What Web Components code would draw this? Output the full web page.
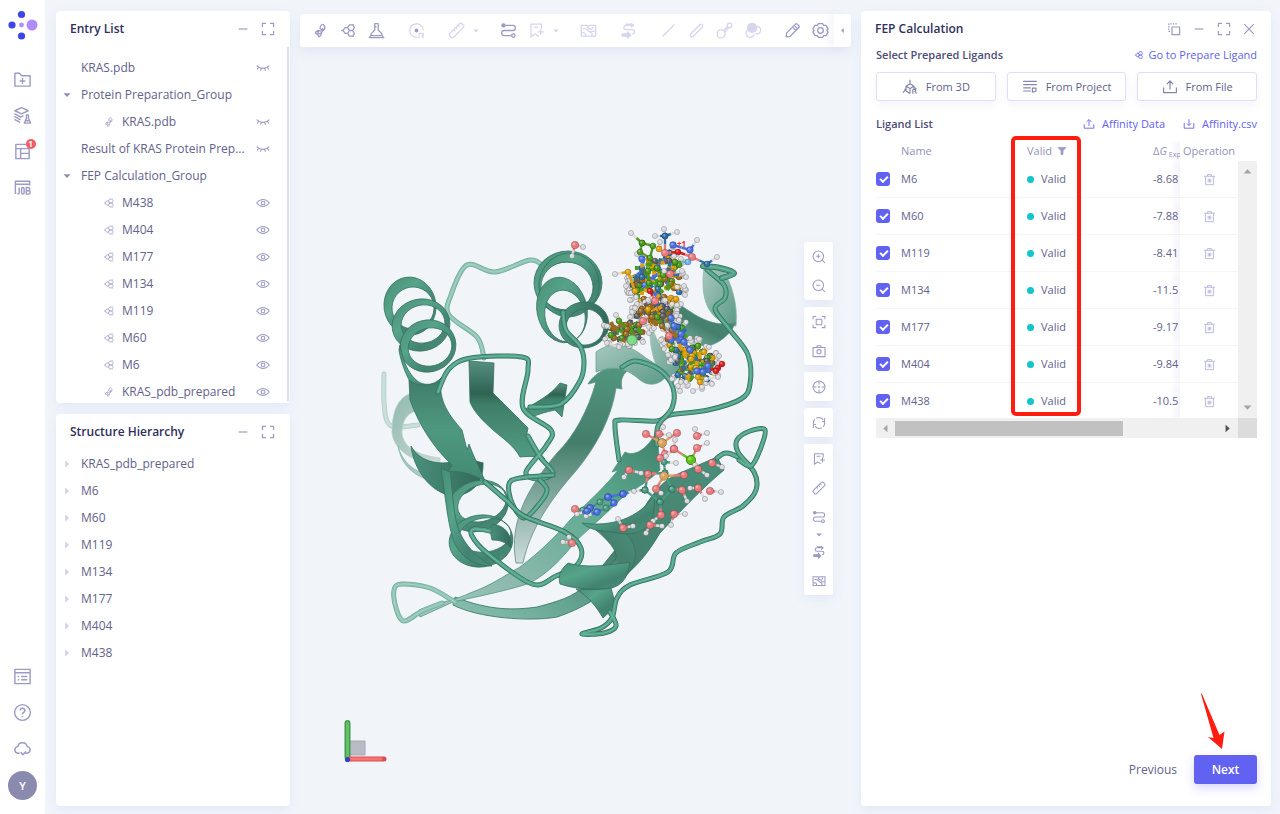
<!DOCTYPE html>
<html lang="en">
<head>
<meta charset="utf-8">
<title>FEP Calculation</title>
<style>
  html, body { margin: 0; height: 100%; }
  body {
    --ink: #2f2f5b;
    --text: #62628c;
    --icon: #9b9bc6;
    --icon-off: #d5d5ee;
    --link: #6161f2;
    --accent: #6161f2;
    --shadow: 0 4px 12px rgba(120, 120, 220, .1);
    background: #f1f5fa;
    font: 12px/20px "Open Sans", "Noto Sans", sans-serif;
    color: var(--text);
  }
</style>
</head>
<body>
<app-shell>
  <side-bar slot="nav"></side-bar>
  <div slot="left" style="display:contents">
    <app-panel heading="Entry List" tools="minus expand" scrollbar>
      <tree-row label="KRAS.pdb" eye="closed"></tree-row>
      <tree-row label="Protein Preparation_Group" caret="open"></tree-row>
      <tree-row label="KRAS.pdb" icon="protein" eye="closed"></tree-row>
      <tree-row label="Result of KRAS Protein Prep..." eye="closed"></tree-row>
      <tree-row label="FEP Calculation_Group" caret="open"></tree-row>
      <tree-row label="M438" icon="ligand" eye="open"></tree-row>
      <tree-row label="M404" icon="ligand" eye="open"></tree-row>
      <tree-row label="M177" icon="ligand" eye="open"></tree-row>
      <tree-row label="M134" icon="ligand" eye="open"></tree-row>
      <tree-row label="M119" icon="ligand" eye="open"></tree-row>
      <tree-row label="M60" icon="ligand" eye="open"></tree-row>
      <tree-row label="M6" icon="ligand" eye="open"></tree-row>
      <tree-row label="KRAS_pdb_prepared" icon="protein" eye="open"></tree-row>
    </app-panel>
    <app-panel heading="Structure Hierarchy" tools="minus expand">
      <tree-row label="KRAS_pdb_prepared" caret="closed"></tree-row>
      <tree-row label="M6" caret="closed"></tree-row>
      <tree-row label="M60" caret="closed"></tree-row>
      <tree-row label="M119" caret="closed"></tree-row>
      <tree-row label="M134" caret="closed"></tree-row>
      <tree-row label="M177" caret="closed"></tree-row>
      <tree-row label="M404" caret="closed"></tree-row>
      <tree-row label="M438" caret="closed"></tree-row>
    </app-panel>
  </div>
  <mol-viewer slot="main"></mol-viewer>
  <app-panel slot="right" heading="FEP Calculation" tools="dock minus expand close">
    <fep-form></fep-form>
  </app-panel>
</app-shell>

<script>
const ICONS = {
  folder: '<path d="M2 3.500h5l2 2.500h9v11H2zM10 8.500v6M7 11.500h6"/>',
  layers: '<path d="M2 5l7-3.200L16 5 9 8.200zM1.500 8l6.500 3.600 3-1.400M1.500 11l6.500 3.600M1.500 14l6 3.200M13.500 9.500h3M14.200 9.800v3.200L12 18h6.500l-2.200-5V9.800M13 15.500h4.500"/>',
  table: '<path d="M3 2.500h14v15H3zM3 7h14M8 7v10.500M8 12h9"/>',
  job: '<path d="M17.500 8V3.500H2.500v12.500h1M2.500 6.500h15M6.500 10v5.500q0 1.500-2 1.500M9 11.500q0-1.500 1.300-1.500 1.400 0 1.400 1.500v4q0 1.500-1.400 1.500Q9 17 9 15.500zM14 10v7h2.200q1.800 0 1.800-1.900 0-1.600-1.800-1.600H14h2q1.500 0 1.500-1.700Q17.500 10 16 10z"/>',
  list: '<path d="M2 2.500h16v15H2zM2 6h16M5 10h1.500M8.500 10H15M5 13.500h1.500M8.500 13.500H15"/>',
  help: '<circle cx="10" cy="10" r="8.300"/><path d="M7.500 8q0-2.500 2.500-2.500T12.500 8q0 1.300-1.400 2T10 12M10 13.700v1.300"/>',
  cloud: '<path d="M7 15H5.500Q2 14.500 2 11.500 2 8.500 5 8q.8-4 5-4t5 4q3 .5 3 3.500T14.500 15H13M8 14l2.500 2.500 3-3.500"/>',
  minus: '<path d="M4.500 10h11"/>',
  expand: '<path d="M3 7.500V3h4.500M12.500 3H17v4.500M17 12.500V17h-4.500M7.500 17H3v-4.500"/>',
  close: '<path d="M4 4l12 12M16 4L4 16"/>',
  dock: '<path d="M7.500 7.500H17V17H7.500z"/><path d="M5 13H3.500V3.500h10V5" stroke-dasharray="1.800 1.400"/>',
  eye: '<path d="M1 10Q5 5 10 5t9 5Q15 15 10 15t-9-5z"/><circle cx="10" cy="10" r="2.600"/>',
  lashes: '<path d="M1 6.500q3.500 4 9 4t9-4M3.800 9L1.500 12M7.500 10.500l-1 3.500M12.500 10.500l1 3.500M16.200 9l2.300 3"/>',
  protein: '<path d="M12.500 2.500q4 3 2 6.500-2.500 2.500-6.500 1-4 .5-4 3.500 3.500 1.500 6.500-.5 3-2 2-6M12 2.500Q9 5 9.500 7.500q2 2.500 5 1M8 10.500q-2.500 4 0 7 3-1 3-4.500"/>',
  ligand: '<path d="M1.500 10h2M3.500 10l2.500-3.500h3l2 3.500-2 3.500H6zM11 3.500h4l2 3-2 3.500h-4L9 6.500zM11 10h4l2 3.500-2 3h-4l-2-3zM15 3.500l1-1M15 16.500l1 1"/>',
  flask: '<path d="M7.500 2h5M8 2v7.500L3.500 14v2h13v-2L12 9.500V2M8 5.500h2M1.500 18.500h17L16.500 16h-13z"/>',
  pick: '<path d="M18 9.500a8 8 0 1 0-7 8.500"/><circle cx="10" cy="10" r="1.500" fill="#9b9bc6" stroke="#9b9bc6"/><path d="M13 13.500h5V16h-1.500l1.500 3M13 13.500V19"/>',
  ruler: '<rect x="0" y="6.800" width="20" height="6.400" rx="2" transform="rotate(-45 10 10)"/><path d="M7 9l1.500 1.500M9.500 6.500L11 8M12 4l1.500 1.500"/>',
  path: '<circle cx="4" cy="4" r="1.800" fill="currentColor"/><path d="M5.500 4H15q3 0 3 3t-3 3H5q-3 0-3 3t3 3h8.500"/><circle cx="15.700" cy="16" r="2"/>',
  bookmark: '<path d="M16 8V2.500H3.500v15l5-3.500 4 3M6.500 6H12M11.500 11.500h7M15 8v7"/>',
  map: '<path d="M1.500 4h6.500l1.500 1 2-1h7v12.500h-17zM3.500 8q4-.5 5.500 1.500t4 3 .5 4M1.500 12.500q4-.5 5 1.500v2.500M9 5q0 3 3 3.500t3-3M12.500 11h5"/>',
  route: '<path d="M13 1.500l3 2.500-3 2.500M16 4H8Q4.500 4 4.500 6.500T7 9h7.500Q17 9 17 11.500T14.500 14M7 2.500h6"/><path d="M2.500 14h6.500v-2.500l3.500 4L9 19v-2.500H2.500z" fill="currentColor"/>',
  line: '<path d="M3 17L17 3"/>',
  stick: '<rect x="0.500" y="8" width="19" height="4" rx="2" transform="rotate(-45 10 10)"/>',
  ball: '<circle cx="6" cy="14" r="4.700"/><circle cx="16" cy="4" r="2.700"/><path d="M9 10.200l4.400-4.600M10.600 11.500L14.800 7"/>',
  spheres: '<circle cx="9.500" cy="7" r="6" fill="currentColor" stroke="none"/><path d="M15.500 5a4.500 4.500 0 1 1-2.500 8.500M4 9.500a4.900 4.900 0 1 0 8 5"/>',
  pencil: '<path d="M2.500 17.500l.7-4.700L13.500 2.500q1-1 2 0l2 2q1 1 0 2L7.200 16.800zM12 4l4 4M10 6l4 4"/>',
  gear: '<circle cx="10" cy="10" r="3.300"/><path d="M7.500 1.800h5l1.200 2.200 2.800 0 2.500 4L17.500 10l1.500 2-2.500 4h-2.800l-1.200 2.200h-5L6.300 16H3.500L1 12l1.500-2L1 8l2.500-4h2.800z"/>',
  zoomin: '<circle cx="9" cy="9" r="7.500"/><path d="M14.500 14.500l4 4M6 9h6M9 6v6"/>',
  zoomout: '<circle cx="9" cy="9" r="7.500"/><path d="M14.500 14.500l4 4M6 9h6"/>',
  fit: '<path d="M1.500 6V2H6M14 2h4.500v4M18.500 14v4H14M6 18H1.500v-4M6 6h8v8H6z"/>',
  camera: '<path d="M1.500 5h17v13h-17zM6.500 5l1-2.500h5l1 2.500"/><circle cx="10" cy="11" r="3"/>',
  target: '<circle cx="10" cy="10" r="8.500"/><path d="M10 1.500v5M10 13.500v5M1.500 10h5M13.500 10h5"/><circle cx="10" cy="10" r=".8"/>',
  refresh: '<path d="M6 3.200Q12 .5 16 5.500M14 16.800Q8 19.500 4 14.500M17.500 7.500a8 8 0 0 1-1.500 8M18 3v5h-3.500M2.500 12.500a8 8 0 0 1 1.500-8M2 17v-5h3.500"/>',
  cube: '<path d="M10 1v5M10 6l5 3v3M10 6L5 9v6l5 3M5 9l5 3 5-3M10 12v6M5 13l-4 4M5 13H3M13.500 13H17v2.500h-1.500M13.500 13v5.500M16.500 15.500l1.500 3M15 11l3 1"/>',
  project: '<path d="M1.500 3h17M1.500 7h17M1.500 11h9.500M1.500 15h9.500M13 11.500h4.500v3.500L15.500 16H13zM13 11.500V17"/>',
  upload: '<path d="M10 13V3M6 6.500L10 2.500l4 4M2 10.500v6.500h16v-6.500"/>',
  download: '<path d="M10 2v10M6.500 9l3.500 3.500L13.500 9M2 8.500v8.500h16V8.500"/>',
  trash: '<path d="M1.500 5h17M4 5v13h12V5M7 5V2.500h6V5M8 9v5.500M12 9v5.500M10 9v5.500"/>',
  funnel: '<path d="M2 3h16l-6 6.500V17H8V9.500z" fill="currentColor"/>',
  down: '<path d="M3 6.500h14L10 14z" fill="currentColor" stroke="none"/>',
  right: '<path d="M6.500 3v14l7.500-7z" fill="currentColor" stroke="none"/>',
  left: '<path d="M13.500 3v14L6 10z" fill="currentColor" stroke="none"/>',
  up: '<path d="M3 13.500h14L10 6z" fill="currentColor" stroke="none"/>'
};

const define = (name, markup, setup) => customElements.define(name, class extends HTMLElement {
  constructor() { super(); this.attachShadow({ mode: 'open' }); }
  connectedCallback() {
    this.shadowRoot.innerHTML = typeof markup === 'function' ? markup(this) : markup;
    if (setup) setup(this.shadowRoot, this);
  }
});

define('ui-icon', el => `
  <style>
    :host { display: inline-block; width: 16px; height: 16px; flex: none; }
    svg { display: block; width: 100%; height: 100%; }
  </style>
  <svg viewBox="0 0 20 20" fill="none" stroke="currentColor" stroke-width="1.500" stroke-linejoin="round" aria-hidden="true">${ICONS[el.getAttribute('name')]}</svg>`);

define('app-shell', `
  <style>
    :host { display: flex; min-height: 100vh; }
    main { flex: 1; min-width: 0; display: flex; gap: 10px; padding: 11px 9px 8px 11px; }
    .left { width: 234px; display: flex; flex-direction: column; gap: 11px; }
    .mid { flex: 1; min-width: 0; display: flex; }
    .right { width: 410px; display: flex; }
    ::slotted(side-bar) { width: 45px; }
  </style>
  <slot name="nav"></slot>
  <main>
    <div class="left"><slot name="left"></slot></div>
    <div class="mid"><slot name="main"></slot></div>
    <div class="right"><slot name="right"></slot></div>
  </main>`);

define('side-bar', `
  <style>
    :host { display: flex; flex-direction: column; align-items: center; background: #fff; padding: 10px 0 14px; box-sizing: border-box; flex: none; }
    .logo { width: 30px; height: 30px; display: block; margin-bottom: 21px; }
    button { position: relative; width: 36px; height: 36px; padding: 0; border: 0; background: none; color: var(--icon); display: grid; place-items: center; }
    ui-icon { width: 19px; height: 19px; }
    .badge { position: absolute; left: 21px; top: 6px; width: 10px; height: 10px; border-radius: 5px; background: #f55b63; color: #fff; font: bold 8px/10px "Noto Sans", sans-serif; text-align: center; }
    .fill { flex: 1; }
    .avatar { width: 29px; height: 29px; border-radius: 50%; background: #8a8aae; color: #fff; font: 600 11px/29px "Open Sans", sans-serif; margin-top: 5px; }
  </style>
  <svg class="logo" viewBox="0 0 30 30"><circle cx="13.500" cy="4.500" r="3.600" fill="#3d45e6"/><circle cx="4" cy="15" r="3.600" fill="#3d45e6"/><circle cx="13.500" cy="26" r="3.600" fill="#3d45e6"/><circle cx="13.500" cy="15" r="2.400" fill="#b18cff"/><circle cx="24" cy="15" r="5.500" fill="#b18cff"/></svg>
  <button aria-label="New project"><ui-icon name="folder"></ui-icon></button>
  <button aria-label="Modules"><ui-icon name="layers"></ui-icon></button>
  <button aria-label="Results"><ui-icon name="table"></ui-icon><span class="badge">1</span></button>
  <button aria-label="Jobs"><ui-icon name="job"></ui-icon></button>
  <span class="fill"></span>
  <button aria-label="Log"><ui-icon name="list"></ui-icon></button>
  <button aria-label="Help"><ui-icon name="help"></ui-icon></button>
  <button aria-label="Cloud"><ui-icon name="cloud"></ui-icon></button>
  <button class="avatar">Y</button>`);

define('app-panel', el => `
  <style>
    :host { display: flex; flex-direction: column; flex: 1; min-width: 0; min-height: 0; background: #fff; border-radius: 4px; box-shadow: var(--shadow); }
    header { display: flex; align-items: center; height: 36px; padding: 0 14px; }
    h2 { margin: 0; flex: 1; font-size: 12px; line-height: 20px; font-weight: 600; color: var(--ink); }
    .tools { display: flex; gap: 9px; }
    .tools button { width: 16px; height: 16px; padding: 0; border: 0; background: none; color: var(--icon); }
    .body { flex: 1; min-height: 0; display: flex; flex-direction: column; }
    .bar { border-right: 2px solid #dcdcf2; margin: 0 1px 2px 0; padding-top: 7px; }
  </style>
  <header><h2>${el.getAttribute('heading')}</h2><div class="tools">${el.getAttribute('tools').split(' ').map(t => `<button aria-label="${t}"><ui-icon name="${t}"></ui-icon></button>`).join('')}</div></header>
  <div class="body ${el.hasAttribute('scrollbar') ? 'bar' : ''}"><slot></slot></div>`);

define('tree-row', el => {
  const c = el.getAttribute('caret'), i = el.getAttribute('icon'), e = el.getAttribute('eye');
  return `
  <style>
    :host { display: flex; align-items: center; height: 27px; flex: none; font-size: 12px; color: var(--text); white-space: nowrap; }
    .caret { flex: none; width: 25px; box-sizing: border-box; padding-left: 6px; display: flex; color: #8e8ebb; }
    .caret ui-icon { width: 10px; height: 10px; }
    .caret.closed { color: #cfcfe8; }
    .kind { flex: none; width: 41px; padding-left: 22px; box-sizing: border-box; display: flex; color: #adadd2; }
    .kind ui-icon { width: 12px; height: 12px; }
    .label { flex: 1; min-width: 0; }
    .eye { flex: none; width: 14px; height: 14px; padding: 0; border: 0; background: none; color: var(--icon); margin-right: 17px; display: block; }
    .eye ui-icon { width: 14px; height: 14px; display: block; }
  </style>
  <span class="caret ${c || ''}">${c ? `<ui-icon name="${c === 'open' ? 'down' : 'right'}"></ui-icon>` : ''}</span>
  ${i ? `<span class="kind"><ui-icon name="${i}"></ui-icon></span>` : ''}
  <span class="label">${el.getAttribute('label')}</span>
  ${e ? `<button class="eye" aria-label="Toggle visibility"><ui-icon name="${e === 'open' ? 'eye' : 'lashes'}"></ui-icon></button>` : ''}`;
});

define('tool-bar', () => {
  const item = s => s === '|' ? '<i></i>' : s === 'v' ? '<button class="more" aria-label="More"><ui-icon name="down"></ui-icon></button>'
    : `<button class="${s[0] === '-' ? 'off' : ''}" aria-label="${s.replace('-', '')}"><ui-icon name="${s.replace('-', '')}"></ui-icon></button>`;
  return `
  <style>
    :host { display: flex; align-items: center; height: 33px; padding-left: 6px; background: #fff; border-radius: 3px; box-shadow: 0 6px 12px rgba(120, 120, 200, .1); flex: none; }
    i { width: 12px; flex: none; }
    button { width: 28px; height: 28px; flex: none; padding: 0; border: 0; background: none; color: var(--icon); display: grid; place-items: center; }
    button ui-icon { width: 17px; height: 17px; }
    .off, .more { color: var(--icon-off); }
    .more { width: 12px; }
    .more ui-icon { width: 8px; height: 8px; }
    .end { width: 17px; height: 33px; margin-left: auto; box-shadow: -6px 0 6px rgba(120, 120, 200, .06); }
    .end ui-icon { width: 7px; height: 7px; }
  </style>
  ${'protein ligand flask | -pick | -ruler v | path -bookmark v | -map | -route | -line -stick -ball -spheres | pencil gear'.split(' ').map(item).join('')}
  <button class="end" aria-label="Collapse"><ui-icon name="left"></ui-icon></button>`;
});

define('tool-rail', () => `
  <style>
    :host { display: flex; flex-direction: column; gap: 7px; }
    div { background: #fff; border-radius: 3px; box-shadow: var(--shadow); }
    button { width: 29px; height: 29px; padding: 0; border: 0; background: none; color: var(--icon); display: grid; place-items: center; }
    ui-icon { width: 14px; height: 14px; }
    .v { height: 6px; }
    .v ui-icon { width: 8px; height: 8px; }
  </style>
  ${['zoomin zoomout', 'fit camera', 'target', 'refresh', 'bookmark ruler path v route map'].map(g => `<div>${g.split(' ').map(n =>
    n === 'v' ? '<button class="v" aria-label="More"><ui-icon name="down"></ui-icon></button>' : `<button aria-label="${n}"><ui-icon name="${n}"></ui-icon></button>`).join('')}</div>`).join('')}`);

/* ---- protein scene ---- */
const tube = (pts, c = 'mid', w = 5) => {
  const k = { mid: ['#35705e', '#4f9e85', '#68b79d'], dark: ['#2c5f50', '#3f8069', '#539a82'], pale: ['#73ac9b', '#8cc2b2', '#a4d2c4'], ghost: ['#b3d0c8', '#c3dcd5', '#cde3dc'] }[c];
  let d = `M${pts[0]}`;
  for (let i = 0; i < pts.length - 1; i++) {
    const p0 = pts[i - 1] || pts[i], p1 = pts[i], p2 = pts[i + 1], p3 = pts[i + 2] || p2;
    d += `C${p1[0] + (p2[0] - p0[0]) / 6} ${p1[1] + (p2[1] - p0[1]) / 6} ${p2[0] - (p3[0] - p1[0]) / 6} ${p2[1] - (p3[1] - p1[1]) / 6} ${p2}`;
  }
  return `<g fill="none" stroke-linecap="round" stroke-linejoin="round"><path d="${d}" stroke="${k[0]}" stroke-width="${w}"/><path d="${d}" stroke="${k[1]}" stroke-width="${w - 1.4}"/><path d="${d}" stroke="${k[2]}" stroke-width="${w / 4}"/></g>`;
};
const rib = (d, f, s = '#35705e', o = 1) => `<path d="${d}" fill="${f}" stroke="${s}" stroke-width=".8" stroke-linejoin="round" fill-rule="evenodd" opacity="${o}"/>`;
const ell = (x, y, a, b, r) => {
  const t = r * Math.PI / 180, X = a * Math.cos(t), Y = a * Math.sin(t);
  return `M${x - X} ${y - Y}A${a} ${b} ${r} 1 1 ${x + X} ${y + Y}A${a} ${b} ${r} 1 1 ${x - X} ${y - Y}Z`;
};
const ring = (x, y, a, b, r, dx, dy, w, h, f = 'url(#coil)') => rib(ell(x, y, a, b, r) + ell(x + dx, y + dy, a - w, b - h, r), f);

const COL = { O: '#e87a7c', H: '#dcdce0', N: '#4a6fe0', C: '#4a9a82', P: '#d9a15c', G: '#4a9a1c', Y: '#e0a00c', B: '#2f6fa8', R: '#dd1c1c', K: '#5b5f63', M: '#5fc314', L: '#7ddc86', T: '#9c6a22', S: '#6bb3e8' };
const RAD = { H: 2.6, O: 3.8, N: 3.4, C: 3.2, P: 4.4, M: 4.6, L: 4.4 };
const ball = (t, x, y) => { const r = RAD[t] || 3; return `<circle cx="${x}" cy="${y}" r="${r}" fill="${COL[t]}" stroke="#00000055" stroke-width=".6"/><circle cx="${x - r / 4}" cy="${y - r / 4}" r="${r / 2.6}" fill="#fff" opacity=".35"/>`; };
const bond = (t, a, u, b, w = 2.4) => { const m = [(a[0] + b[0]) / 2, (a[1] + b[1]) / 2]; return `<path d="M${a}L${m}" stroke="${COL[t]}" stroke-width="${w}"/><path d="M${m}L${b}" stroke="${COL[u]}" stroke-width="${w}"/>`; };
/* text form: "type x y type x y ..." draws a bonded chain */
const chain = s => {
  const v = s.split(' '), a = []; let o = '';
  for (let i = 0; i < v.length; i += 3) a.push([v[i], +v[i + 1], +v[i + 2]]);
  for (let i = 1; i < a.length; i++) o += bond(a[i - 1][0], a[i - 1].slice(1), a[i][0], a[i].slice(1));
  return o + a.map(p => ball(...p)).join('');
};
/* overlapping ligand poses: hydrogens round the rim, sticks in the middle */
const cluster = (cx, cy, rx, ry, n, types, seed) => {
  let s = seed, core = '', rim = ''; const rnd = () => (s = (s * 16807) % 2147483647) / 2147483647;
  for (let i = 0; i < n; i++) {
    const t = rnd() * 6.283, q = Math.sqrt(rnd()), x = Math.round(cx + rx * q * Math.cos(t)), y = Math.round(cy + ry * q * Math.sin(t));
    const k = types[Math.floor(rnd() * types.length)], u = rnd() * 6.283;
    const out = q > .7, X = Math.round(x + 7 * Math.cos(out ? t : u)), Y = Math.round(y + 7 * Math.sin(out ? t : u));
    const e = out ? 'H' : types[Math.floor(rnd() * types.length)];
    const g = bond(k, [x, y], e, [X, Y], 4) + (i % 3 && !out ? '' : ball(k, x, y)) + (out ? ball(e, X, Y) : '');
    if (out) rim += g; else core += g;
  }
  return rim + core;
};

const scene = () => `
  <defs>
    <linearGradient id="coil" x1="0" y1="0" x2="1" y2="1"><stop offset="0" stop-color="#478d76"/><stop offset=".35" stop-color="#56a48a"/><stop offset=".7" stop-color="#428370"/><stop offset="1" stop-color="#4b927a"/></linearGradient>
    <linearGradient id="coilDark" x1="0" y1="0" x2="1" y2="0"><stop offset="0" stop-color="#4a927b"/><stop offset="1" stop-color="#33685a"/></linearGradient>
    <linearGradient id="down" x1="0" y1="0" x2="0" y2="1"><stop offset="0" stop-color="#529880"/><stop offset=".4" stop-color="#457e6b"/><stop offset=".75" stop-color="#93b5ac"/><stop offset="1" stop-color="#cddcdc"/></linearGradient>
    <linearGradient id="sheet" x1="1" y1="0" x2="0" y2="1"><stop offset="0" stop-color="#3f8069"/><stop offset=".3" stop-color="#5aa88e"/><stop offset=".65" stop-color="#86b6a8"/><stop offset="1" stop-color="#a6c9c0"/></linearGradient>
    <linearGradient id="sheet2" x1="1" y1="0" x2="0" y2="1"><stop offset="0" stop-color="#4a8f79"/><stop offset=".5" stop-color="#45806d"/><stop offset=".75" stop-color="#66a592"/><stop offset="1" stop-color="#8cc2b2"/></linearGradient>
    <linearGradient id="fold" x1="0" y1="0" x2="0" y2="1"><stop offset="0" stop-color="#57907e"/><stop offset=".33" stop-color="#2f6353"/><stop offset=".45" stop-color="#3f7f69"/><stop offset="1" stop-color="#529c84"/></linearGradient>
    <linearGradient id="arrow" x1="0" y1="0" x2="0" y2="1"><stop offset="0" stop-color="#3f7d69"/><stop offset=".5" stop-color="#4f9880"/><stop offset="1" stop-color="#438a72"/></linearGradient>
    <linearGradient id="pale" x1="0" y1="0" x2="1" y2="1"><stop offset="0" stop-color="#a6c8bf"/><stop offset="1" stop-color="#5c9a86"/></linearGradient>
    <linearGradient id="ghost" x1="0" y1="0" x2="1" y2="1"><stop offset="0" stop-color="#8fb8ac"/><stop offset="1" stop-color="#cddedb"/></linearGradient>
  </defs>
  <g>
  ${tube([[384, 374], [384, 402], [387, 421], [396, 427], [418, 425]], 'ghost')}
  ${rib('M392 433C392 405 402 392 420 392C438 394 446 404 446 420C440 412 430 408 420 410C406 412 402 422 402 434C404 448 418 455 440 458L440 466C412 462 394 450 392 433Z', 'url(#ghost)', '#b7d0c9')}
  ${rib('M398 446C404 470 430 482 458 474L483 462C482 480 462 488 442 484C416 478 402 468 398 446Z', 'url(#ghost)', '#8fb8ac')}
  ${rib('M411 446C420 462 440 468 466 458L483 463C484 484 470 496 452 496C430 492 414 470 411 446Z', 'url(#coilDark)')}
  ${rib('M628 362C606 366 594 374 588 384L596 382C588 410 575 435 557 453C530 485 508 520 516 563L523 563C530 530 550 500 575 472C598 445 612 415 616 388L622 389C619 376 626 368 644 362Z', 'url(#down)', '#5f8f80')}
  ${rib('M704 268C700 300 708 322 736 326C738 304 732 284 722 268Z', 'url(#pale)', '#8ab5a8')}
  ${rib('M678 303C700 320 718 328 736 322C730 336 716 346 704 346C688 340 668 336 660 322Z', 'url(#sheet2)', '#5c9a86')}
  ${rib('M650 318C654 340 668 362 686 368L672 384C656 376 648 350 650 318Z', 'url(#pale)', '#9fc3ba')}
  ${rib('M596 352C616 338 630 346 646 358L668 372C664 384 650 388 640 380C624 366 612 366 596 372Z', 'url(#pale)', '#6fa593')}
  ${tube([[543, 266], [530, 260], [495, 272], [467, 265], [451, 295], [449, 315], [477, 337], [484, 358]], 'pale')}
  ${rib('M717 457L724 470C700 490 680 512 660 533C650 550 638 566 623 577C605 592 590 606 557 617C530 622 478 618 453 605L455 597C490 611 515 610 537 607C560 601 574 596 583 587C600 570 625 540 647 503C660 484 668 478 680 473Z', 'url(#sheet2)')}
  ${rib('M625 452C636 458 650 446 657 430L660 470C650 480 640 486 623 497C608 512 592 526 577 540C562 558 550 572 530 583C510 590 480 596 453 602L420 617L419 610C440 602 456 600 470 593C490 586 504 576 520 567C540 552 558 534 570 520C590 500 606 486 618 470L612 472Z', 'url(#sheet)', '#4f9680')}
  ${rib('M469 361L494 363L493 393L528 428L526 438L545 459C538 456 530 456 520 457C514 446 505 440 493 430C482 420 474 412 470 402Z', 'url(#fold)')}
  ${rib('M524 410C536 402 550 396 560 383L567 385L562 417L555 410C546 412 538 414 530 418Z', 'url(#fold)')}
  ${ring(568, 283, 34, 32, 0, -1, 3, 6, 8)}
  ${ring(569, 285, 30, 32, 10, -2, 2, 4, 7)}
  ${ring(562, 310, 25, 33, -12, 3, 6, 5, 7)}
  ${ring(584, 325, 25, 23, -10, 1, 2, 6, 5, 'url(#coilDark)')}
  ${tube([[563, 312], [566, 330], [580, 346], [584, 362], [580, 381], [561, 404], [530, 407]])}
  ${ring(410, 306, 26, 29, -8, 3, 2, 5, 8)}
  ${ring(421, 325, 29, 26, -12, 2, -1, 7, 7)}
  ${ring(428, 346, 28, 26, -14, 2, 1, 6, 7)}
  ${rib('M400 345C404 368 414 382 424 384C434 386 442 380 446 370C442 386 438 396 430 398C416 400 402 370 399 350Z', 'url(#coil)')}
  ${rib('M409 380C420 388 434 386 441 378C438 402 450 416 462 430L467 450L469 444C474 458 480 468 485 481C472 474 460 470 448 472L452 465C436 450 420 428 410 400Z', 'url(#arrow)')}
  ${ring(478, 506, 31, 25, -20, 4, -3, 6, 7)}
  ${ring(481, 541, 32, 26, -8, 4, -6, 6, 9)}
  ${rib('M490 530L493 524C505 526 512 534 511 548C506 542 500 540 492 540Z', 'url(#coilDark)')}
  ${rib('M441 468C446 500 448 530 456 546C466 562 480 566 492 566C474 556 460 540 456 520C452 500 452 482 450 472Z', 'url(#coil)')}
  ${tube([[438, 392], [449, 369], [471, 358], [522, 357], [528, 370], [523, 408], [551, 430], [546, 446], [526, 472], [538, 479], [553, 473], [541, 458], [528, 436]])}
  ${tube([[553, 475], [520, 478], [509, 484], [512, 503], [524, 518], [540, 503], [547, 490], [540, 480]])}
  ${tube([[485, 482], [506, 500], [524, 516], [565, 532], [581, 548], [577, 565], [556, 576], [532, 584], [487, 553], [472, 536], [474, 529], [490, 531]])}
  ${tube([[707, 270], [724, 285], [725, 298], [715, 309], [730, 330], [748, 355], [750, 384], [741, 399], [708, 410], [670, 415], [657, 421], [620, 420], [615, 426], [619, 460]])}
  ${tube([[703, 266], [720, 268], [734, 273], [722, 278]], 'mid', 6)}
  ${tube([[622, 367], [636, 361], [660, 370], [673, 388], [672, 408], [658, 426], [657, 445]])}
  ${rib('M582 523C602 526 634 524 654 496C656 522 646 534 626 534C606 534 590 530 582 523Z', 'url(#coil)')}
  ${rib('M596 530L626 534C640 546 638 566 622 580L606 566C620 562 622 552 596 530Z', 'url(#sheet2)')}
  ${rib('M568 563C584 568 606 566 630 562C628 576 624 584 612 588C596 590 578 590 560 584C558 576 560 570 568 563Z', 'url(#coil)')}
  ${rib('M576 589C590 590 600 590 611 588L616 606L603 618C596 606 588 596 576 589Z', 'url(#coil)')}
  ${tube([[717, 458], [726, 453], [739, 458], [754, 472], [756, 490], [743, 506], [724, 517], [720, 534], [700, 542], [676, 553], [668, 572], [630, 585], [617, 598], [612, 618], [601, 628], [582, 634], [604, 633], [616, 626], [610, 612]])}
  ${tube([[739, 460], [751, 466], [760, 450], [765, 430], [750, 431], [737, 440], [738, 452], [750, 466]])}
  ${tube([[455, 602], [430, 588], [402, 584], [394, 590], [396, 608], [404, 621], [422, 611], [442, 603]], 'pale')}
  </g>
  <g>
  ${chain('N 623 494 N 608 497 C 600 502 N 590 508 C 583 510 O 575 509')}
  ${chain('N 608 497 N 614 503 C 606 508 N 597 512 H 586 516')}
  ${chain('N 590 508 N 587 511 H 577 514')}${chain('N 623 494 H 634 491 C 645 490')}
  ${chain('C 645 490 O 648 474 C 665 473 C 672 489 C 660 502 C 645 490')}${chain('C 672 489 O 682 490 H 687 501')}
  ${chain('C 660 502 O 661 515 H 653 521')}${chain('C 665 473 C 664 462 H 676 463')}${chain('O 684 475 P 664 476 O 656 489 H 661 493')}
  ${chain('O 646 434 P 662 443 O 677 433')}${chain('P 662 443 O 665 454 O 660 458')}${chain('H 663 427 O 659 434 H 669 435')}
  ${chain('H 675 440 O 674 449 H 666 456')}${chain('M 691 460 O 674 449')}${chain('M 691 460 O 697 448 H 707 443')}
  ${chain('H 695 429 O 697 436 H 707 433')}${chain('O 712 463 H 722 467')}${chain('M 691 460 H 695 465 O 698 469 H 707 475')}
  ${chain('H 624 477 O 629 470 H 641 473')}${chain('H 690 488 O 698 488 H 705 499')}${chain('O 710 491 H 721 492')}
  ${chain('H 671 525 O 674 514 H 685 514')}${chain('H 646 533 O 650 525 H 662 526')}${chain('H 618 519 O 623 528 H 633 526')}
  ${chain('H 563 542 O 572 543 H 569 537')}${chain('H 583 247 O 575 245 H 572 256')}
  ${cluster(657, 278, 25, 32, 120, 'YGGBKYTN', 4411)}
  ${cluster(694, 364, 20, 20, 90, 'YGBGKYG', 333)}
  ${cluster(626, 330, 18, 10, 40, 'TGTKG', 71)}${cluster(655, 314, 20, 9, 50, 'YTKTGT', 913)}${cluster(677, 338, 9, 14, 26, 'YTNGB', 57)}
  ${chain('G 642 243 G 653 246 G 650 258 G 640 252 G 642 243')}${chain('G 657 268 G 663 275 G 660 284 G 649 283 G 648 271 G 657 268')}
  ${chain('H 615 274 Y 628 272 Y 635 291')}${chain('H 655 236 B 665 236 H 677 232')}${chain('B 665 236 H 664 229')}${chain('B 665 236 O 665 253 R 678 252 O 692 257 B 707 264 H 717 257')}
  ${chain('G 675 262 S 688 262')}${chain('H 697 240 N 690 250 N 673 245')}${chain('H 664 271 O 670 274 H 682 271')}
  ${chain('O 655 301 R 650 291')}${chain('O 643 321 T 652 317')}${chain('O 669 336 T 662 326')}
  <circle cx="632" cy="340" r="5" fill="#7fdc88" stroke="#4da65a"/>
  ${chain('N 671 318 N 674 326')}${chain('N 684 342 N 690 350')}${chain('N 697 371 N 708 366')}${chain('N 703 372 R 718 368')}${chain('R 716 371 R 722 364')}
  ${chain('H 631 233 G 642 243')}${chain('H 636 297 H 630 300')}${chain('H 686 382 H 680 391')}${chain('H 706 379 H 718 377')}
  ${chain('H 619 347 H 607 343')}${chain('H 677 287 H 684 286')}${chain('H 693 391 H 702 387')}
  <text x="677" y="247" font-family="Noto Sans, sans-serif" font-size="8" font-weight="700" fill="#f22">+1</text>
  </g>
  <g stroke-linecap="round" fill="none">
    <path d="M350 741h15v14h-15z" fill="#b9bcc4" stroke="#a5a8b2"/>
    <path d="M347.500 723v34" stroke="#459a4c" stroke-width="6"/><path d="M347.500 723v34" stroke="#62c266" stroke-width="3"/>
    <path d="M349 759h35" stroke="#d84f53" stroke-width="5"/><path d="M349 759h32" stroke="#ff7272" stroke-width="3"/>
    <circle cx="347.500" cy="759.500" r="2.600" fill="#3344b8"/>
  </g>`;

define('mol-viewer', () => `
  <style>
    :host { flex: 1; min-width: 0; display: flex; flex-direction: column; position: relative; padding-top: 3px; }
    .canvas { flex: 1; min-height: 0; display: block; width: 100%; }
    tool-rail { position: absolute; right: 18px; top: 231px; }
  </style>
  <tool-bar></tool-bar>
  <svg class="canvas" viewBox="300 47 551 759" role="img" aria-label="KRAS protein with docked ligands">${scene()}</svg>
  <tool-rail></tool-rail>`);

define('ligand-table', () => `
  <style>
    :host { display: block; position: relative; font-size: 11px; line-height: 20px; }
    .wrap { display: grid; grid-template-columns: 1fr 19px; grid-template-rows: 277px 20px; }
    .view { overflow: hidden; }
    table { width: 100%; border-collapse: separate; border-spacing: 0; table-layout: fixed; }
    th, td { padding: 0; text-align: left; font-weight: 400; white-space: nowrap; }
    th { height: 20px; color: #9292ba; }
    th ui-icon { width: 10px; height: 10px; color: var(--icon); margin-left: 5px; vertical-align: -1px; }
    td { height: 36px; border-bottom: 1px solid #f4f4f9; }
    sub { font-size: 7px; line-height: 8px; vertical-align: -2px; margin-left: 2px; }
    .op { text-align: center; box-shadow: -5px 0 6px rgba(110, 110, 210, .08); clip-path: inset(0 0 0 -10px); background: #fff; }
    th.op { clip-path: inset(0 -10px 0 -10px); }
    .op button { display: block; margin: 0 auto; padding: 0; border: 0; background: none; color: #b9b9dc; width: 13px; height: 13px; }
    .op button ui-icon { width: 13px; height: 13px; display: block; }
    input { appearance: none; display: block; margin: 0; width: 14px; height: 14px; border-radius: 3px; background: var(--accent); position: relative; }
    input::after { content: ""; position: absolute; left: 4px; top: 4px; width: 6px; height: 3px; border: solid #fff; border-width: 0 0 2px 2px; transform: rotate(-45deg); }
    .dot { display: inline-block; width: 7px; height: 7px; border-radius: 50%; background: #10c5cb; margin-right: 7px; }
    .v { margin-top: 20px; background: #f0f0f0; display: flex; flex-direction: column; justify-content: space-between; align-items: center; padding: 5px 0; color: #a3a3a3; }
    .v ui-icon, .h ui-icon { width: 11px; height: 11px; }
    .h { background: #f0f0f0; display: flex; align-items: center; color: #a3a3a3; padding: 0 5px 0 4px; }
    .thumb { width: 228px; height: 15px; background: #c1c1c1; margin-left: 4px; }
    .h ui-icon:last-child { margin-left: auto; color: #505050; }
    .corner { background: #dcdcdc; }
    .mark { position: absolute; left: 135px; top: -5px; width: 62px; height: 272px; border: 4px solid #ff1d10; border-radius: 5px; pointer-events: none; }
  </style>
  <div class="wrap">
    <div class="view"><table>
      <colgroup><col style="width:25px"><col style="width:126px"><col><col style="width:27px"><col style="width:58px"></colgroup>
      <thead><tr><th></th><th>Name</th><th>Valid<ui-icon name="funnel"></ui-icon></th><th>Δ<em>G</em><sub>Exp</sub></th><th class="op">Operation</th></tr></thead>
      <tbody>${[['M6', '-8.68'], ['M60', '-7.88'], ['M119', '-8.41'], ['M134', '-11.5'], ['M177', '-9.17'], ['M404', '-9.84'], ['M438', '-10.5']].map(([n, g]) => `
        <tr><td><input type="checkbox" checked aria-label="Select ${n}"></td><td>${n}</td><td><span class="dot"></span>Valid</td><td>${g}</td><td class="op"><button aria-label="Delete ${n}"><ui-icon name="trash"></ui-icon></button></td></tr>`).join('')}
      </tbody>
    </table></div>
    <div class="v"><ui-icon name="up"></ui-icon><ui-icon name="down"></ui-icon></div>
    <div class="h"><ui-icon name="left"></ui-icon><span class="thumb"></span><ui-icon name="right"></ui-icon></div>
    <div class="corner"></div>
  </div>
  <div class="mark"></div>`);

define('fep-form', `
  <style>
    :host { flex: 1; display: flex; flex-direction: column; padding: 0 14px 22px 15px; font-size: 11px; line-height: 16px; }
    .row { display: flex; align-items: center; gap: 18px; height: 16px; }
    h3 { margin: 0; flex: 1; font-size: 11px; line-height: 16px; font-weight: 600; color: #4d4d78; }
    a { color: var(--link); text-decoration: none; display: flex; align-items: center; gap: 4px; }
    a ui-icon { width: 10px; height: 10px; }
    .wide a { gap: 7px; }
    .wide a ui-icon { width: 12px; height: 12px; }
    .wide { height: 20px; }
    .sources { display: grid; grid-template-columns: repeat(3, 1fr); gap: 11px; margin: 9px 0 13px; }
    .sources button { height: 29px; display: flex; align-items: center; justify-content: center; gap: 8px; padding: 0; background: #fff; border: 1px solid #dedef8; border-radius: 3px; box-shadow: 0 4px 8px rgba(120, 120, 220, .08); font: 11px/16px "Open Sans", "Noto Sans", sans-serif; color: var(--text); }
    .sources ui-icon { color: #8585ab; }
    ligand-table { margin-top: 7px; }
    footer { margin-top: auto; display: flex; justify-content: flex-end; gap: 8px; }
    footer button { position: relative; height: 29px; padding: 0 9px; border: 0; background: none; border-radius: 3px; font: 12px/20px "Open Sans", "Noto Sans", sans-serif; color: var(--text); }
    footer .next { width: 63px; background: var(--accent); color: #fff; font-weight: 600; box-shadow: 0 4px 10px rgba(97, 97, 242, .25); }
    .arrow { position: absolute; left: 5px; top: -62px; width: 28px; height: 56px; }
  </style>
  <div class="row"><h3>Select Prepared Ligands</h3><a href="#"><ui-icon name="ligand"></ui-icon>Go to Prepare Ligand</a></div>
  <div class="sources">
    <button><ui-icon name="cube"></ui-icon>From 3D</button>
    <button><ui-icon name="project"></ui-icon>From Project</button>
    <button><ui-icon name="upload"></ui-icon>From File</button>
  </div>
  <div class="row wide"><h3>Ligand List</h3><a href="#"><ui-icon name="upload"></ui-icon>Affinity Data</a><a href="#"><ui-icon name="download"></ui-icon>Affinity.csv</a></div>
  <ligand-table></ligand-table>
  <footer>
    <button>Previous</button>
    <button class="next">Next<svg class="arrow" viewBox="0 0 28 56" aria-hidden="true"><path d="M2 1Q2 0 3 1L20.500 42L25.500 38.500L23 56L9 44L14.500 45Z" fill="#ff1d10"/></svg></button>
  </footer>`);
</script>
</body>
</html>
